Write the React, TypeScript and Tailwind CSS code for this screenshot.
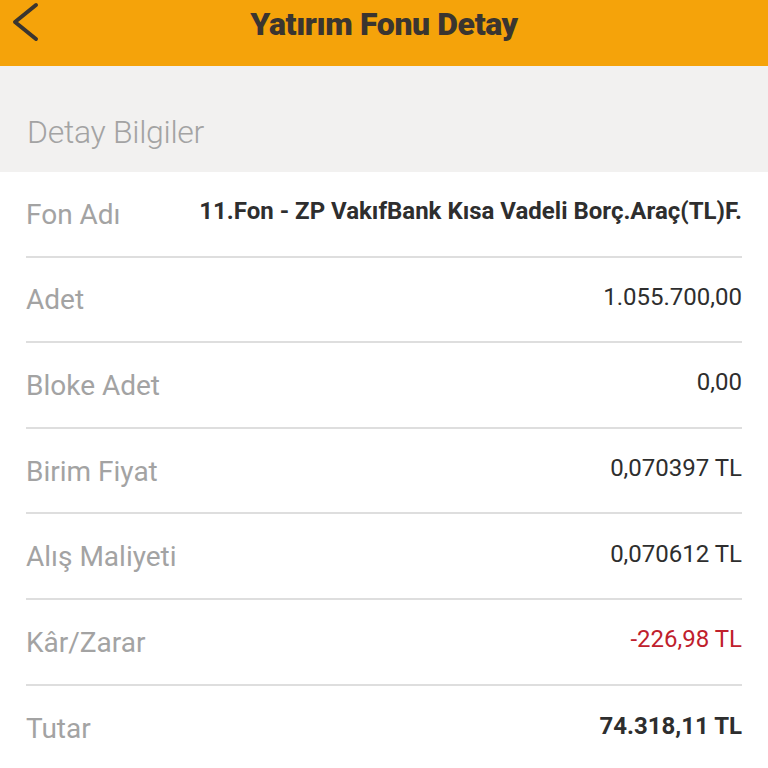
const rows = [
  { label: "Fon Adı", value: "11.Fon - ZP VakıfBank Kısa Vadeli Borç.Araç(TL)F.", kind: "bold" },
  { label: "Adet", value: "1.055.700,00" },
  { label: "Bloke Adet", value: "0,00" },
  { label: "Birim Fiyat", value: "0,070397 TL" },
  { label: "Alış Maliyeti", value: "0,070612 TL" },
  { label: "Kâr/Zarar", value: "-226,98 TL", kind: "red" },
  { label: "Tutar", value: "74.318,11 TL", kind: "bold" },
];

export default function App() {
  return (
    <div className="min-h-screen bg-white font-['Roboto',sans-serif]">
      {/* Header */}
      <div className="relative h-[66px] bg-[#f5a30a] flex items-start justify-center">
        <button className="absolute left-[8px] top-[0px]">
          <svg width="34" height="44" viewBox="0 0 34 44" fill="none">
            <polyline
              points="28,5 7,22 28,39"
              stroke="#3a3530"
              strokeWidth="4"
              strokeLinecap="round"
              strokeLinejoin="round"
            />
          </svg>
        </button>
        <h1 className="mt-[0px] text-[32px] font-black text-[#3a3530] tracking-[-0.4px]">
          Yatırım Fonu Detay
        </h1>
      </div>

      {/* Section title */}
      <div className="h-[106px] bg-[#f2f1f0] flex items-center pl-[27px] pt-[26px]">
        <p className="text-[32px] font-light text-[#a3a3a3] tracking-[-0.3px]">Detay Bilgiler</p>
      </div>

      {/* Rows */}
      <div className="px-[26px]">
        {rows.map((row, i) => (
          <div
            key={row.label}
            className={`h-[85.6px] flex items-center justify-between ${
              i < rows.length - 1 ? "border-b-2 border-[#dedede]" : ""
            }`}
          >
            <span className="text-[28px] text-[#a3a3a3] pt-[2px]">{row.label}</span>
            <span
              className={
                row.kind === "bold"
                  ? "text-[24px] font-bold text-[#2e2e2e] mb-[5px]"
                  : row.kind === "red"
                  ? "text-[24px] text-[#c0202c] mb-[5px]"
                  : "text-[24px] text-[#2e2e2e] mb-[5px]"
              }
            >
              {row.value}
            </span>
          </div>
        ))}
      </div>
    </div>
  );
}
